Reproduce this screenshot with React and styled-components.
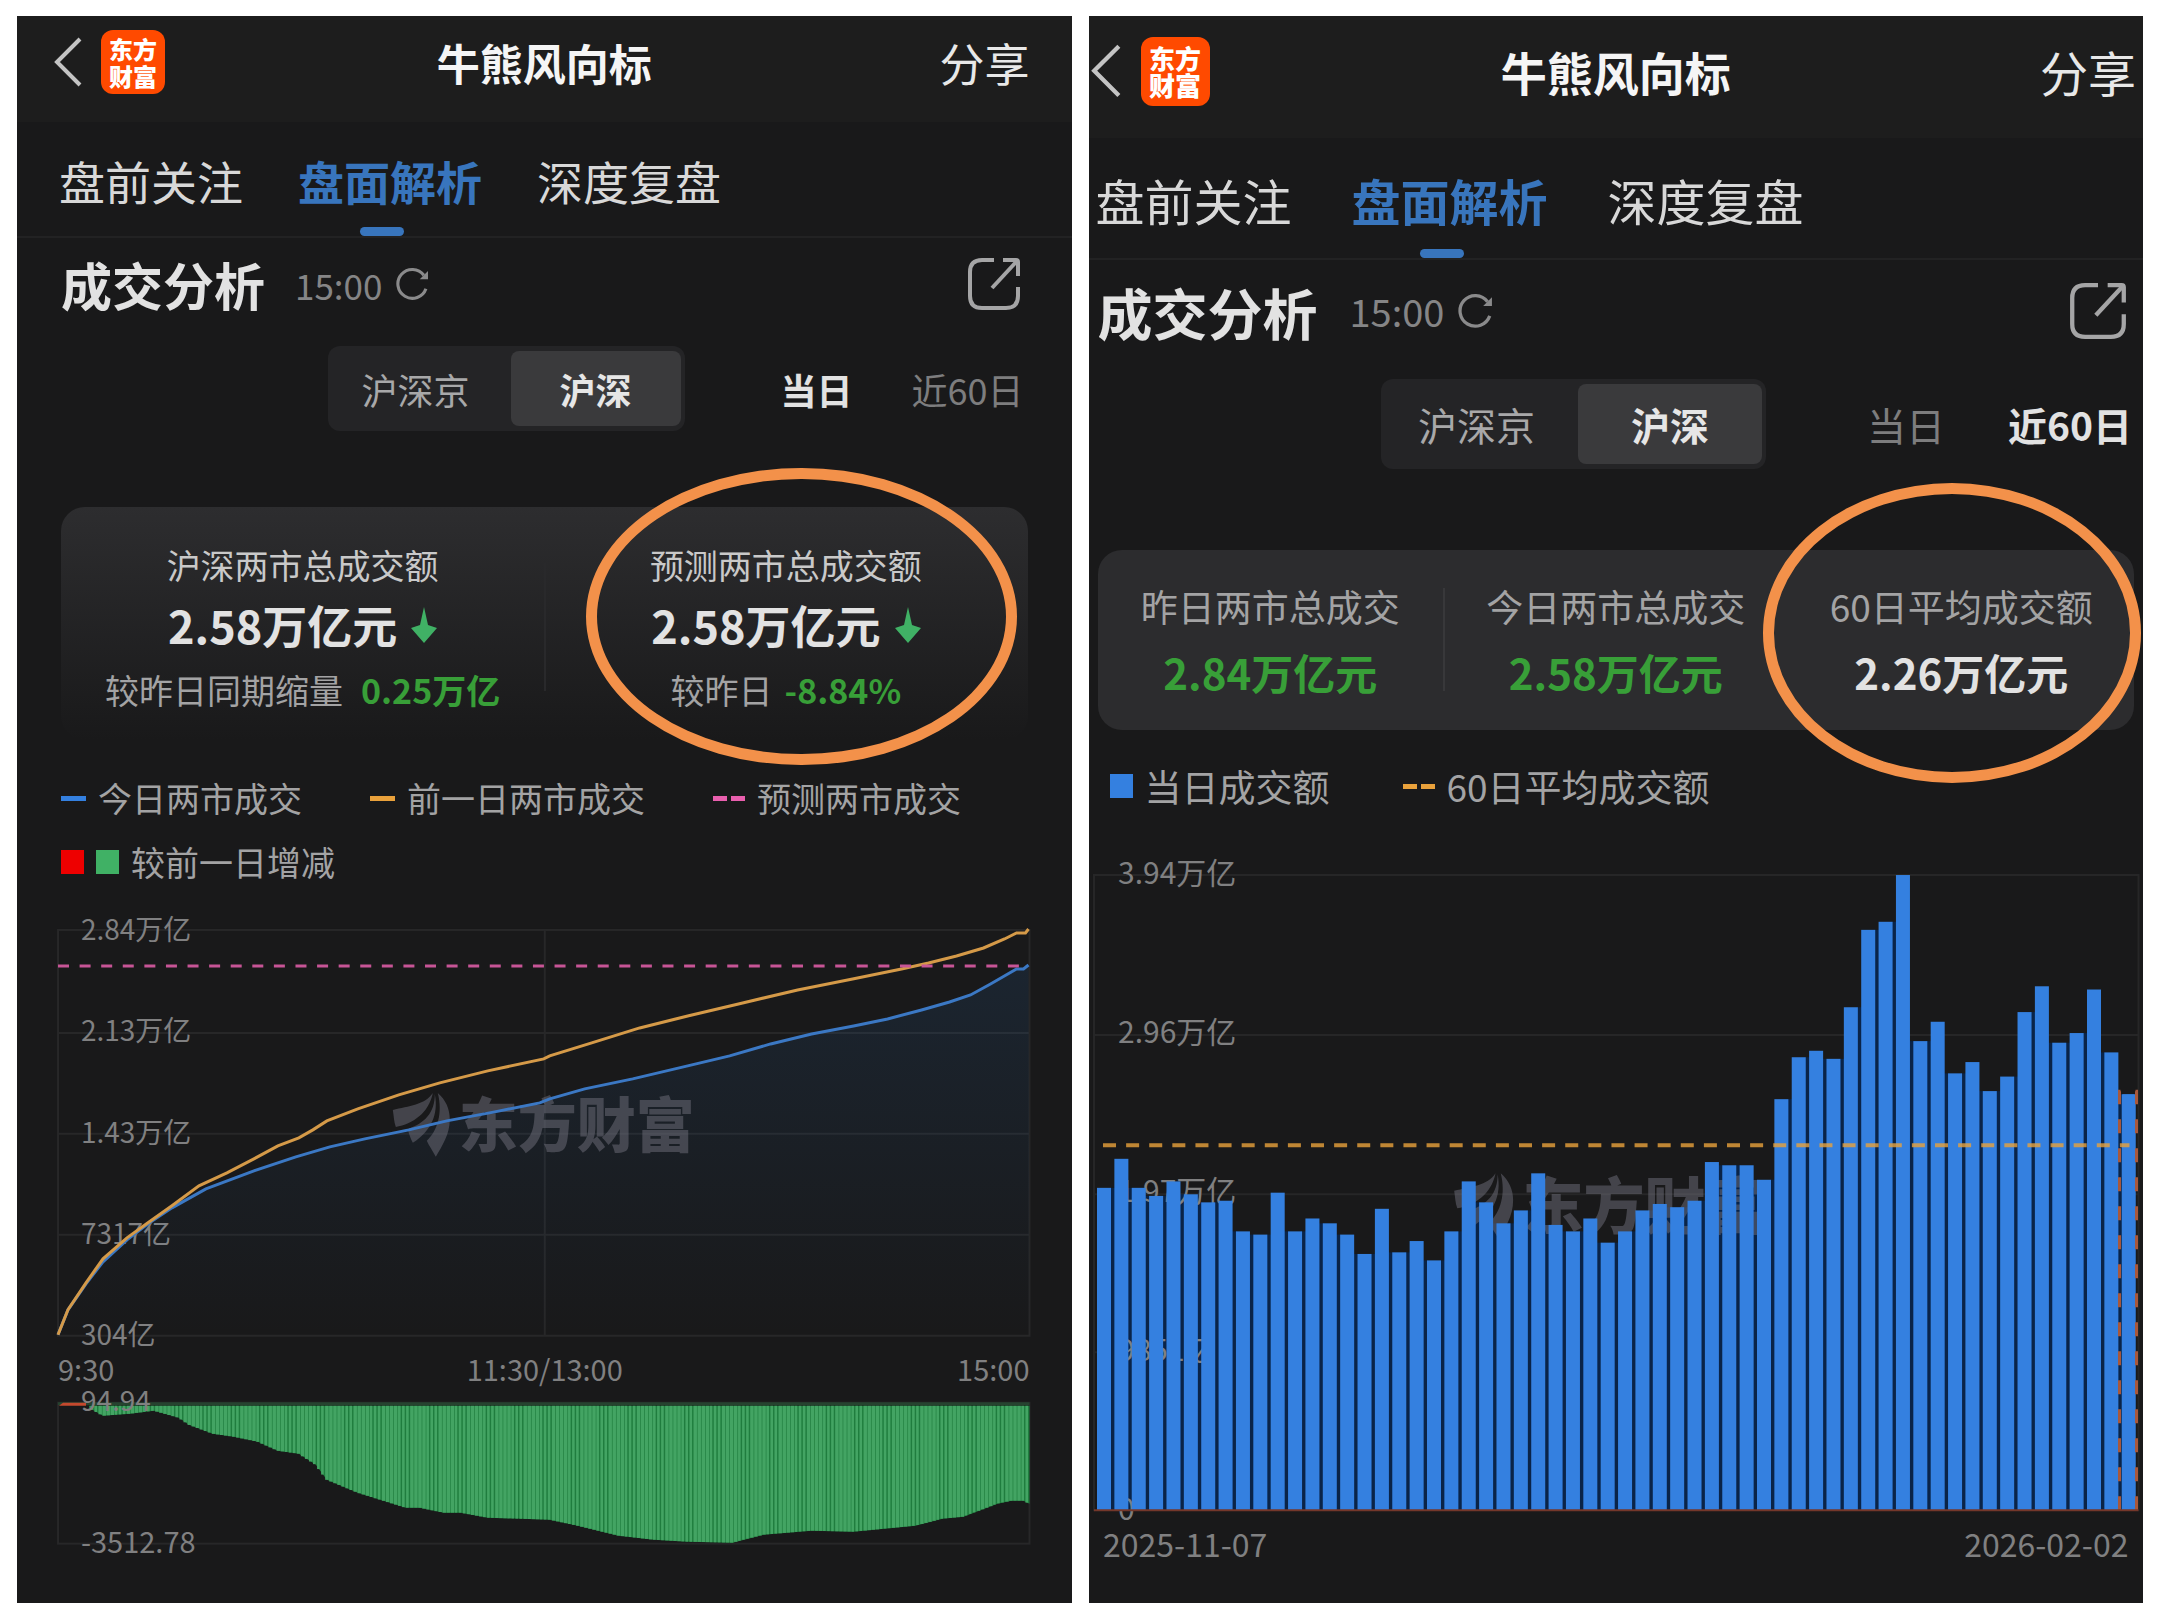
import React from "react";
import styled, { createGlobalStyle, css, ThemeProvider } from "styled-components";

const BLUE = "#3480e0";
const ORANGE = "#e9a13b";
const PINK = "#e95fae";
const GREEN = "#40b165";
const MUTED = "#a3a3a4";

//the phones are cropped differently, so each one has its own set of sizes
const dayTheme = {
  headerHeight: 106,
  headerPadding: "0 42px 14px 42px",
  logo: 64,
  logoText: 24,
  chevron: 28,
  logoGap: 19,
  title: 43,
  share: 45,
  tabsHeight: 116,
  tab: 46,
  tabGap: 55,
  side: 44,
  heading: 51,
  headingRow: 98,
  headingGap: 30,
  time: 35,
  icon: 54,
  refresh: 34,
  filter: 36,
  filterMargin: "10px 4px 76px 0",
  filterGap: 59,
  filterSpace: 96,
  switchHeight: 85,
  firstPadding: "0 41px 0 29px",
  lastPadding: "0 49px",
  legend: 34,
  legendGap: 68,
  legendPadding: "26px 44px 1px 44px",
  chartPadding: "0 42px 0 41px",
};

const rangeTheme = {
  headerHeight: 122,
  headerPadding: "0 7px 12px 7px",
  logo: 69,
  logoText: 26,
  chevron: 30,
  logoGap: 20,
  title: 46,
  share: 48,
  tabsHeight: 122,
  tab: 49,
  tabGap: 60,
  side: 9,
  heading: 55,
  headingRow: 108,
  headingGap: 32,
  time: 38,
  icon: 58,
  refresh: 36,
  filter: 39,
  filterMargin: "11px 2px 81px 0",
  filterGap: 63,
  filterSpace: 101,
  switchHeight: 90,
  firstPadding: "0 43px 0 33px",
  lastPadding: "0 53px",
  legend: 37,
  legendGap: 73,
  legendPadding: "24px 21px 1px 21px",
  chartPadding: "0 5px",
};

//turnover per trading day, in trillions
const turnover = [
  2.0, 2.18, 2.0, 1.95, 2.04, 1.96, 1.91, 1.92, 1.73, 1.71, 1.97, 1.73, 1.81,
  1.78, 1.71, 1.59, 1.87, 1.6, 1.67, 1.55, 1.73, 2.04, 1.91, 1.78, 1.86, 2.09,
  1.77, 1.73, 1.81, 1.66, 1.73, 1.86, 1.9, 1.88, 1.92, 2.16, 2.14, 2.14, 2.05,
  2.55, 2.81, 2.85, 2.8, 3.12, 3.6, 3.65, 3.94, 2.91, 3.03, 2.71, 2.78, 2.6,
  2.69, 3.09, 3.25, 2.9, 2.96, 3.23, 2.84, 2.58,
];

const yesterdayLine =
  "0,405 10,380 28,353 45,329 69,308 90,293 114,276 141,256 169,243 196,229 220,216 241,208 255,200 269,191 300,179 341,165 382,153 430,141 486,129 492,126 534,113 582,98 630,86 685,73 740,60 795,49 844,39 871,33 899,26 926,18 947,9 959,3 968,3 971,-1";

const todayLine =
  "0,405 10,380 28,354 45,332 69,310 90,294 114,278 148,259 196,241 238,227 272,217 307,209 351,200 389,191 437,182 482,173 492,169 527,159 575,149 630,136 672,126 713,114 754,104 796,96 830,89 864,80 892,72 913,65 933,54 959,39 966,39 971,35";

//lower edge of the difference bars, sampled as [x, depth]
const diffEdge = [
  [31, 2], [45, 10], [72, 8], [96, 5], [121, 12], [131, 19], [155, 28],
  [176, 31], [200, 36], [220, 45], [241, 48], [258, 59], [269, 74], [300, 87],
  [348, 102], [362, 102], [386, 107], [403, 107], [430, 112], [492, 114],
  [520, 120], [561, 130], [596, 134], [630, 136], [675, 137], [706, 129],
  [754, 125], [796, 126], [858, 120], [885, 113], [906, 111], [940, 98],
  [954, 95], [966, 95], [972, 98],
];

const depthAt = (x) => {
  const i = diffEdge.findIndex(([px]) => px >= x);
  if (i <= 0) return diffEdge[0][1];
  const [x0, d0] = diffEdge[i - 1];
  const [x1, d1] = diffEdge[i];
  return d0 + ((d1 - d0) * (x - x0)) / (x1 - x0);
};

function Watermark({ x, y, size }) {
  return (
    <g>
      <g transform={`translate(${x} ${y}) scale(${size / 59})`} fill="#70707c" fillOpacity="0.5">
        <path d="M40 0C32 12 16 13 0 17C1 23 1 29 3 34C20 31 36 20 40 0Z" />
        <path d="M42 1C42 20 32 30 15 36C16 41 18 46 20 50C38 38 46 22 42 1Z" />
        <path d="M45 0C53 7 57 16 57 26C57 42 49 53 43 64C40 58 36 53 34 48C45 37 50 20 45 0Z" />
      </g>
      <WatermarkText x={x + (size * 66) / 59} y={y + size * 0.92} $size={size}>
        东方财富
      </WatermarkText>
    </g>
  );
}

function Header() {
  return (
    <HeaderBar>
      <HeaderLeft>
        <IconButton aria-label="返回">
          <Chevron viewBox="0 0 28 50" fill="none">
            <path d="M26 2L3 25L26 48" stroke="#c4c4c4" strokeWidth="4" />
          </Chevron>
        </IconButton>
        <Logo href="#home">
          东方
          <br />
          财富
        </Logo>
      </HeaderLeft>
      <PageTitle>牛熊风向标</PageTitle>
      <ShareButton>分享</ShareButton>
    </HeaderBar>
  );
}

function Tabs() {
  return (
    <TabBar>
      <Tab>盘前关注</Tab>
      <Tab $active>盘面解析</Tab>
      <Tab>深度复盘</Tab>
    </TabBar>
  );
}

function Heading() {
  return (
    <HeadingRow>
      <h2>成交分析</h2>
      <time>15:00</time>
      <IconButton aria-label="刷新">
        <RefreshIcon viewBox="0 0 33 33" fill="none" stroke="#8a8a8b" strokeWidth="3">
          <path d="M30 21A14 14 0 1 1 28 8" />
          <path d="M32 4V12H24Z" fill="#8a8a8b" stroke="none" />
        </RefreshIcon>
      </IconButton>
      <OpenButton aria-label="打开">
        <OpenIcon viewBox="0 0 54 54" fill="none" stroke="#a5a5a6" strokeWidth="4">
          <path d="M27 3H15Q3 3 3 15V39Q3 51 15 51H39Q51 51 51 39V30" />
          <path d="M36 3H49Q51 3 51 5V19" />
          <path d="M50 4L25 31" />
        </OpenIcon>
      </OpenButton>
    </HeadingRow>
  );
}

function Filters({ range }) {
  return (
    <FilterRow>
      <MarketSwitch>
        <MarketButton>沪深京</MarketButton>
        <MarketButton $active>沪深</MarketButton>
      </MarketSwitch>
      <RangeGroup>
        <RangeButton $active={range === "day"}>当日</RangeButton>
        <RangeButton $active={range === "sixty"}>近60日</RangeButton>
      </RangeGroup>
    </FilterRow>
  );
}

function DownArrow() {
  return (
    <ArrowIcon viewBox="0 0 26 36">
      <path d="M13 0L17 18L26 21L13 36L0 21L9 18Z" fill={GREEN} />
    </ArrowIcon>
  );
}

function DayChart() {
  const bars = [];
  for (let i = 8; i < 240; i++) {
    const x = i * 4.05;
    //some strokes are thinner, which gives the uneven stripes
    const width = i % 7 < 3 ? 2.6 : 3.4;
    bars.push(<rect key={i} x={x} y="511" width={width} height={depthAt(x + 2)} />);
  }
  const area = diffEdge.map(([x, d]) => `${x},${511 + d}`).join(" ");

  return (
    <ChartArea>
      <Chart viewBox="0 0 972 708">
        <defs>
          <linearGradient id="todayFill" x1="0" y1="0" x2="0" y2="1">
            <stop offset="0" stopColor="#2b7bd0" stopOpacity="0.12" />
            <stop offset="1" stopColor="#2b7bd0" stopOpacity="0" />
          </linearGradient>
        </defs>
        <g stroke="#272728" strokeWidth="2" fill="none">
          <rect x="0" y="35" width="972" height="406" />
          <path d="M0 138H972M0 239H972M0 340H972M487 35V441" />
          <rect x="0" y="508" width="972" height="141" />
        </g>
        <AxisText x="23" y="45">2.84万亿</AxisText>
        <AxisText x="23" y="146">2.13万亿</AxisText>
        <AxisText x="23" y="248">1.43万亿</AxisText>
        <AxisText x="23" y="349">7317亿</AxisText>
        <AxisText x="23" y="450">304亿</AxisText>
        <AxisText x="0" y="486" $size={29}>9:30</AxisText>
        <AxisText x="487" y="486" $size={29} textAnchor="middle">11:30/13:00</AxisText>
        <AxisText x="972" y="486" $size={29} textAnchor="end">15:00</AxisText>

        <g transform="translate(0 35)" fill="none" strokeWidth="3">
          <polygon points={`${todayLine} 972,406 0,406`} fill="url(#todayFill)" />
          <Watermark x={335} y={163} size={59} />
          <polyline points={todayLine} stroke="#3b78c4" />
          <polyline points={yesterdayLine} stroke="#d59a48" />
          <path d="M0 36H972" stroke="#c75596" strokeDasharray="11 10.6" />
        </g>

        <polygon points={`31,511 ${area} 972,511`} fill="#1f7d3e" />
        <g fill="#43a463">{bars}</g>
        <path d="M0 509H972" stroke="#26432f" strokeWidth="3" />
        <path d="M1 511L5 508H28V511Z" fill="#c5492e" />
        <AxisText x="23" y="516">94.94</AxisText>
        <AxisText x="23" y="658" $size={29}>-3512.78</AxisText>
      </Chart>
    </ChartArea>
  );
}

function SixtyDayChart() {
  const base = 691;
  const pitch = 17.36;
  const height = (v) => (v / 3.94) * 635;

  return (
    <ChartArea>
      <Chart viewBox="0 0 1044 784">
        <g stroke="#262627" strokeWidth="2" fill="none">
          <path d="M0 692V56H1044V692M0 216H1044M0 375H1044M0 533H1044" />
        </g>
        {turnover.slice(1).map((v, i) => {
          const h = height(Math.min(v, turnover[i]));
          return (
            <rect key={i} x={16 + i * pitch} y={base - h} width="5" height={h} fill="#0a2448" />
          );
        })}
        <AxisText x="24" y="65" $size={30}>3.94万亿</AxisText>
        <AxisText x="24" y="224" $size={30}>2.96万亿</AxisText>
        <AxisText x="24" y="383" $size={30}>1.97万亿</AxisText>
        <AxisText x="24" y="542" $size={30}>9851亿</AxisText>
        <AxisText x="24" y="701" $size={30}>0</AxisText>
        <Watermark x={360} y={354} size={61} />
        <g fill={BLUE}>
          {turnover.map((v, i) => (
            <rect key={i} x={3 + i * pitch} y={base - height(v)} width="14" height={height(v)} />
          ))}
        </g>
        <path
          d="M1025 691V272H1042V691"
          fill="none"
          stroke="#a8583c"
          strokeWidth="3"
          strokeDasharray="14 15"
        />
        <rect x="1028" y={base - height(2.58)} width="12" height={height(2.58)} fill={BLUE} />
        <path d="M0 691H1044" stroke="#74372a" strokeWidth="2" />
        <path d="M9 326H1035" stroke={ORANGE} strokeOpacity="0.8" strokeWidth="4" strokeDasharray="13 10.1" />
        <AxisText x="9" y="738" $size={32}>2025-11-07</AxisText>
        <AxisText x="1034" y="738" $size={32} textAnchor="end">2026-02-02</AxisText>
      </Chart>
    </ChartArea>
  );
}

export default function App() {
  return (
    <>
      <GlobalStyle />
      <Page>
        <ThemeProvider theme={dayTheme}>
          <Panel>
            <Header />
            <Tabs />
            <Heading />
            <Filters range="day" />
            <DayCard>
              <DayStat>
                <p>沪深两市总成交额</p>
                <strong>
                  2.58万亿元 <DownArrow />
                </strong>
                <Compare $gap={18}>
                  较昨日同期缩量 <b>0.25万亿</b>
                </Compare>
              </DayStat>
              <DayStat>
                <p>预测两市总成交额</p>
                <strong>
                  2.58万亿元 <DownArrow />
                </strong>
                <Compare $gap={12}>
                  较昨日 <b>-8.84%</b>
                </Compare>
                <Ring $inset="-39px 11px -25px 42px" />
              </DayStat>
            </DayCard>
            <Legend>
              <LegendItem>
                <Dash $color={BLUE} />
                今日两市成交
              </LegendItem>
              <LegendItem>
                <Dash $color={ORANGE} />
                前一日两市成交
              </LegendItem>
              <LegendItem>
                <Dash $color={PINK} $double />
                预测两市成交
              </LegendItem>
              <LegendItem>
                <Square $color="#ee0000" />
                <Square $color={GREEN} />
                较前一日增减
              </LegendItem>
            </Legend>
            <DayChart />
          </Panel>
        </ThemeProvider>

        <ThemeProvider theme={rangeTheme}>
          <Panel>
            <Header />
            <Tabs />
            <Heading />
            <Filters range="sixty" />
            <RangeCard>
              <RangeStat $color="#389f38">
                <p>昨日两市总成交</p>
                <strong>2.84万亿元</strong>
              </RangeStat>
              <RangeStat $color="#389f38">
                <p>今日两市总成交</p>
                <strong>2.58万亿元</strong>
              </RangeStat>
              <RangeStat $color="#e2e2e2">
                <p>60日平均成交额</p>
                <strong>2.26万亿元</strong>
                <Ring $inset="-67px -7px -53px -26px" />
              </RangeStat>
            </RangeCard>
            <Legend>
              <LegendItem>
                <Square $color={BLUE} />
                当日成交额
              </LegendItem>
              <LegendItem>
                <Dash $color={ORANGE} $double />
                60日平均成交额
              </LegendItem>
            </Legend>
            <SixtyDayChart />
          </Panel>
        </ThemeProvider>
      </Page>
    </>
  );
}

const GlobalStyle = createGlobalStyle`
  * {
    box-sizing: border-box;
  }
  body {
    margin: 0;
    background: #fff;
    font-family: "Noto Sans CJK SC", "Noto Sans", sans-serif;
    line-height: 1;
  }
  h1, h2, p {
    margin: 0;
  }
  button {
    padding: 0;
    border: 0;
    background: none;
    color: inherit;
    font: inherit;
    white-space: nowrap;
    cursor: pointer;
  }
`;

const flexCenter = css`
  display: flex;
  align-items: center;
`;

const Page = styled.main`
  display: grid;
  grid-template-columns: 1fr 1fr;
  gap: 17px;
  padding: 16px 17px;
`;

const Panel = styled.section`
  min-width: 0;
  background: #19191a;
  color: #d8d8d8;
`;

const HeaderBar = styled.header`
  display: grid;
  grid-template-columns: 1fr auto 1fr;
  align-items: center;
  height: ${(p) => p.theme.headerHeight}px;
  padding: ${(p) => p.theme.headerPadding};
  background: #1d1d1d;
`;

const HeaderLeft = styled.div`
  ${flexCenter}
  gap: ${(p) => p.theme.logoGap}px;
  margin-left: -5px;
`;

const IconButton = styled.button`
  display: flex;
`;

const Chevron = styled.svg`
  width: ${(p) => p.theme.chevron}px;
`;

const Logo = styled.a`
  display: grid;
  place-content: center;
  width: ${(p) => p.theme.logo}px;
  height: ${(p) => p.theme.logo}px;
  border-radius: 12px;
  background: #ff4a00;
  color: #fff;
  font-size: ${(p) => p.theme.logoText}px;
  font-weight: 900;
  line-height: 27px;
  text-decoration: none;
`;

const PageTitle = styled.h1`
  color: #f5f5f5;
  font-size: ${(p) => p.theme.title}px;
  font-weight: 700;
`;

const ShareButton = styled.button`
  justify-self: end;
  color: #e8e8e8;
  font-size: ${(p) => p.theme.share}px;
`;

const TabBar = styled.nav`
  display: flex;
  gap: ${(p) => p.theme.tabGap}px;
  height: ${(p) => p.theme.tabsHeight}px;
  padding: 2px ${(p) => p.theme.side - 2}px 0;
  border-bottom: 2px solid #222223;
`;

const Tab = styled.button`
  position: relative;
  font-size: ${(p) => p.theme.tab}px;
  ${(p) =>
    p.$active &&
    css`
      color: #3875bd;
      font-weight: 700;

      &::after {
        content: "";
        position: absolute;
        bottom: 0;
        left: 50%;
        width: 44px;
        height: 9px;
        margin-left: -30px;
        border-radius: 5px;
        background: #3875bd;
      }
    `}
`;

const HeadingRow = styled.div`
  ${flexCenter}
  height: ${(p) => p.theme.headingRow}px;
  padding: 0 ${(p) => p.theme.side}px 6px;

  & > h2 {
    color: #e2e2e2;
    font-size: ${(p) => p.theme.heading}px;
    font-weight: 700;
  }
  & > time {
    margin: 0 13px 0 ${(p) => p.theme.headingGap}px;
    color: #858586;
    font-size: ${(p) => p.theme.time}px;
  }
`;

const RefreshIcon = styled.svg`
  width: ${(p) => p.theme.refresh}px;
`;

const OpenButton = styled(IconButton)`
  margin: 0 7px 0 auto;
`;

const OpenIcon = styled.svg`
  width: ${(p) => p.theme.icon}px;
`;

const FilterRow = styled.div`
  ${flexCenter}
  justify-content: flex-end;
  gap: ${(p) => p.theme.filterSpace}px;
  margin: ${(p) => p.theme.filterMargin};
  padding: 0 ${(p) => p.theme.side}px;
  font-size: ${(p) => p.theme.filter}px;
`;

const MarketSwitch = styled.div`
  display: flex;
  height: ${(p) => p.theme.switchHeight}px;
  padding: 5px 4px;
  border-radius: 12px;
  background: #242426;
`;

const MarketButton = styled.button`
  padding: ${(p) => (p.$active ? p.theme.lastPadding : p.theme.firstPadding)};
  border-radius: 8px;
  background: ${(p) => (p.$active ? "#3a3a3c" : "transparent")};
  color: ${(p) => (p.$active ? "#e6e6e6" : "#a8a8a9")};
  font-weight: ${(p) => (p.$active ? 700 : 400)};
`;

const RangeGroup = styled.div`
  display: flex;
  gap: ${(p) => p.theme.filterGap}px;
`;

const RangeButton = styled.button`
  color: ${(p) => (p.$active ? "#e2e2e2" : "#7d7d7e")};
  font-weight: ${(p) => (p.$active ? 700 : 400)};
`;

const DayCard = styled.div`
  display: grid;
  grid-template-columns: 1fr 1fr;
  margin: 0 ${(p) => p.theme.side}px;
  border-radius: 24px;
  background: linear-gradient(#2d2d2f, #19191a);
`;

const divider = css`
  & + &::before {
    content: "";
    position: absolute;
    left: 0;
    width: 2px;
    background: #38383a;
  }
`;

const DayStat = styled.div`
  position: relative;
  display: flex;
  flex-direction: column;
  align-items: center;
  padding: 29px 0 16px;
  ${divider}

  & + &::before {
    top: 56px;
    bottom: 49px;
    background: #29292b;
  }
  & > p {
    color: #c9c9c9;
    font-size: 34px;
    line-height: 58px;
  }
  & > strong {
    ${flexCenter}
    gap: 14px;
    color: #e2e2e2;
    font-size: 45px;
    line-height: 62px;
  }
`;

const ArrowIcon = styled.svg`
  width: 26px;
`;

const Compare = styled.span`
  ${flexCenter}
  gap: ${(p) => p.$gap}px;
  color: ${MUTED};
  font-size: 34px;
  line-height: 68px;

  & > b {
    color: #389f38;
  }
`;

const RangeCard = styled.div`
  display: grid;
  grid-template-columns: repeat(3, 1fr);
  margin: 0 ${(p) => p.theme.side}px;
  border-radius: 24px;
  background: #2c2c2e;
`;

const RangeStat = styled.div`
  position: relative;
  display: flex;
  flex-direction: column;
  align-items: center;
  padding: 23px 0 25px;
  ${divider}

  & + &::before {
    top: 38px;
    bottom: 39px;
  }
  & > p {
    color: ${MUTED};
    font-size: 37px;
    line-height: 66px;
  }
  & > strong {
    color: ${(p) => p.$color};
    font-size: 42px;
    line-height: 66px;
  }
`;

//hand drawn highlight over a stat
const Ring = styled.i`
  position: absolute;
  inset: ${(p) => p.$inset};
  z-index: 1;
  border: 11px solid #f3914a;
  border-radius: 50%;
  pointer-events: none;
`;

const Legend = styled.div`
  display: flex;
  flex-wrap: wrap;
  column-gap: ${(p) => p.theme.legendGap}px;
  padding: ${(p) => p.theme.legendPadding};
`;

const LegendItem = styled.span`
  ${flexCenter}
  gap: 12px;
  height: 64px;
  color: ${MUTED};
  font-size: ${(p) => p.theme.legend}px;
`;

const Dash = styled.i`
  width: ${(p) => (p.$double ? 32 : 25)}px;
  height: 5px;
  background: ${(p) =>
    p.$double
      ? `linear-gradient(90deg, ${p.$color} 14px, transparent 14px 18px, ${p.$color} 18px)`
      : p.$color};
`;

const Square = styled.i`
  width: 23px;
  height: 24px;
  background: ${(p) => p.$color};
`;

const ChartArea = styled.div`
  padding: ${(p) => p.theme.chartPadding};
`;

const Chart = styled.svg`
  display: block;
  width: 100%;
  overflow: visible;
`;

const AxisText = styled.text`
  fill: #808081;
  font-size: ${(p) => p.$size || 28}px;
`;

const WatermarkText = styled.text`
  fill: #70707c;
  fill-opacity: 0.5;
  font-size: ${(p) => p.$size}px;
  font-weight: 900;
`;
